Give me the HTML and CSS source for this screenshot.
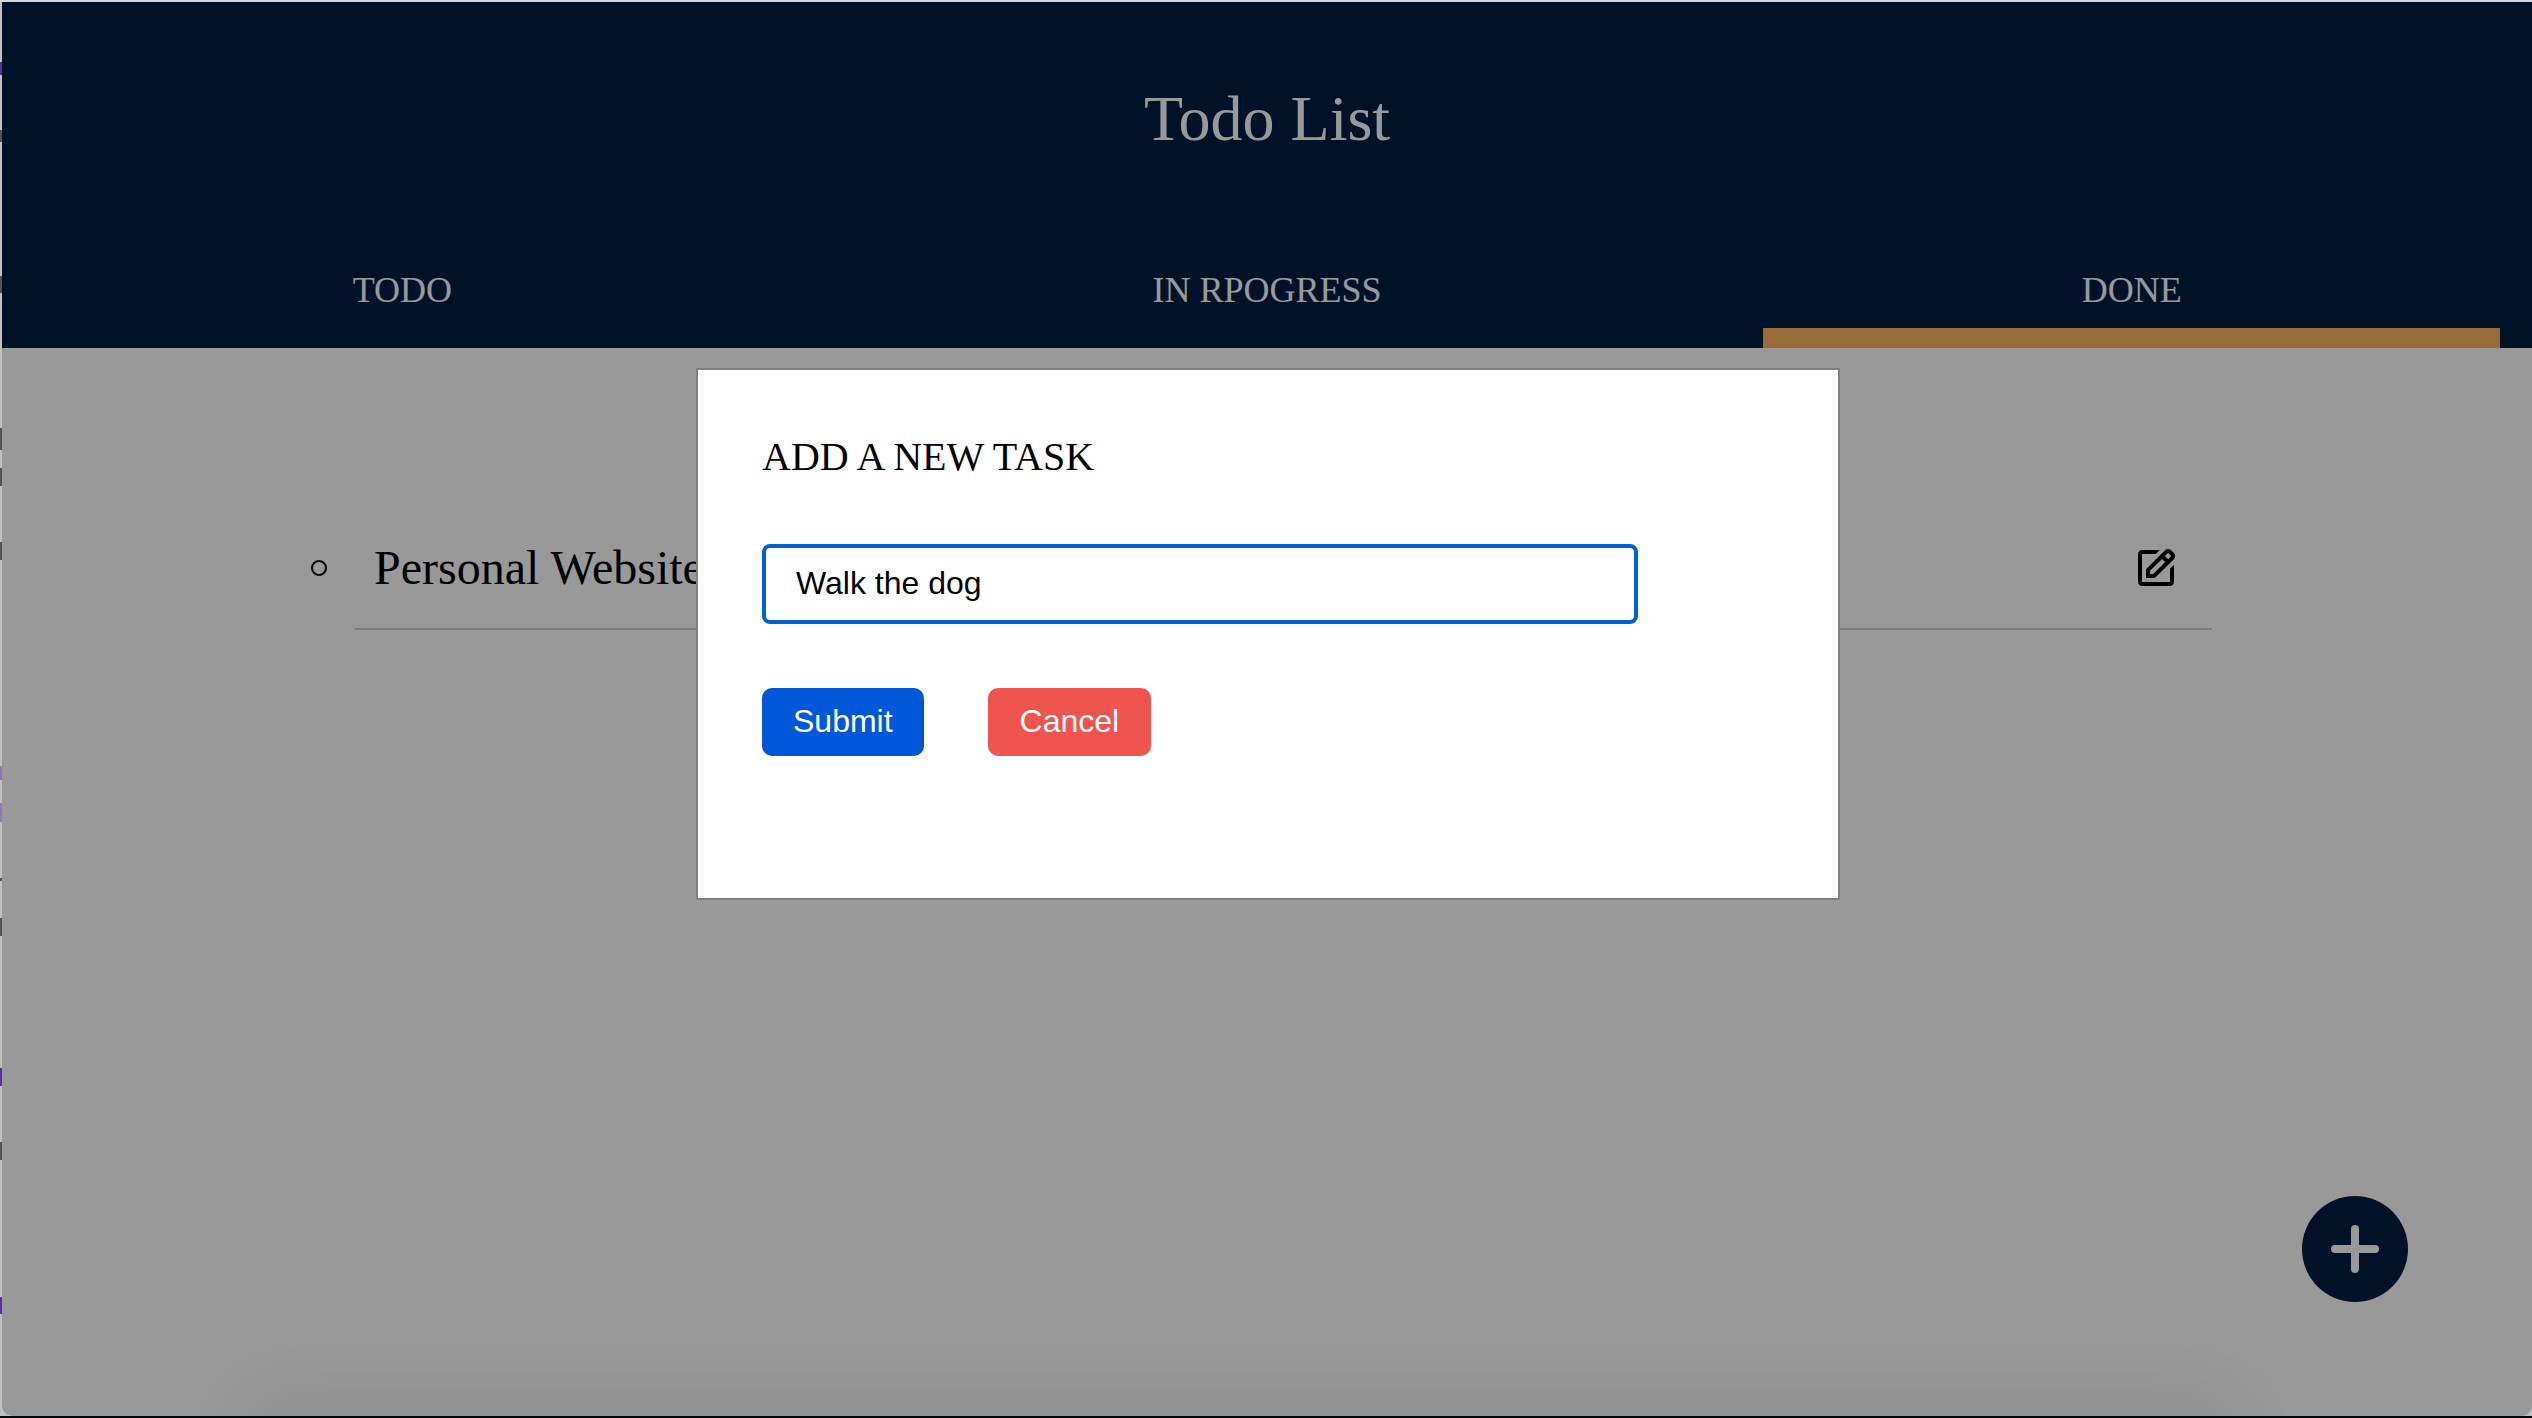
FILE: index.html
```html
<!DOCTYPE html>
<html lang="en">
<head>
  <meta charset="utf-8">
  <title>Todo List</title>
  <link rel="stylesheet" href="styles.css">
</head>
<body>
  <div class="window">
    <header class="header">
      <h1 class="title">Todo List</h1>
      <nav class="tabs">
        <a class="tab" href="#todo">TODO</a>
        <a class="tab" href="#progress">IN RPOGRESS</a>
        <a class="tab active" href="#done" aria-current="page">DONE</a>
      </nav>
    </header>
    <main class="content">
      <ul class="tasks">
        <li class="task">
          <span class="bullet"></span>
          <span class="task-name">Personal Website</span>
          <button class="edit" type="button" aria-label="Edit task">
            <svg viewBox="0 0 24 24" width="48" height="48" fill="currentColor" aria-hidden="true">
              <path d="m7 17.013 4.413-.015 9.632-9.54c.378-.378.586-.88.586-1.414s-.208-1.036-.586-1.414l-1.586-1.586c-.756-.756-2.075-.752-2.825-.003L7 12.583v4.43zM18.045 4.458l1.589 1.583-1.597 1.582-1.586-1.585 1.594-1.58zM9 13.417l6.03-5.973 1.586 1.586-6.029 5.971L9 15.006v-1.589z"/>
              <path d="M5 21h14c1.103 0 2-.897 2-2v-8.668l-2 2V19H5V5h6.847l2-2H5c-1.103 0-2 .897-2 2v14c0 1.103.897 2 2 2z"/>
            </svg>
          </button>
        </li>
      </ul>
    </main>
    <button class="add" type="button" aria-label="Add task">
      <svg viewBox="0 0 50 50" width="50" height="50" fill="none" stroke="currentColor" stroke-width="8" stroke-linecap="round" aria-hidden="true">
        <path d="M25 5v40M5 25h40"/>
      </svg>
    </button>
    <div class="scrim">
      <form class="modal" role="dialog" aria-labelledby="modal-title">
        <label class="modal-title" id="modal-title" for="task">ADD A NEW TASK</label>
        <input class="field" id="task" type="text" value="Walk the dog">
        <div class="actions">
          <button class="button submit" type="submit">Submit</button>
          <button class="button cancel" type="button">Cancel</button>
        </div>
      </form>
    </div>
  </div>
</body>
</html>
```
FILE: styles.css
```css
* { box-sizing: border-box; }

/* The page behind shows as a thin strip round the window, with slivers of its text at the left. */
body {
  margin: 0;
  height: 100vh;
  padding: 2px 0 2px 2px;
  background:
    linear-gradient(to top, #010a10 2px, transparent 2px),
    linear-gradient(to bottom, #d5d7de 2px, transparent 2px),
    linear-gradient(to bottom,
      transparent 62px, #5b2f9c 62px 75px,
      transparent 75px 130px, #50555a 130px 142px,
      transparent 142px 276px, #50555a 276px 293px,
      transparent 293px 428px, #50555a 428px 450px,
      transparent 450px 468px, #50555a 468px 486px,
      transparent 486px 542px, #50555a 542px 560px,
      transparent 560px 766px, #8f78b8 766px 780px,
      transparent 780px 803px, #8f78b8 803px 822px,
      transparent 822px 878px, #50555a 878px 881px,
      transparent 881px 918px, #50555a 918px 936px,
      transparent 936px 1068px, #5b2f9c 1068px 1086px,
      transparent 1086px 1142px, #50555a 1142px 1160px,
      transparent 1160px 1297px, #5b2f9c 1297px 1314px,
      transparent 1314px),
    #bfc0bf;
  font-family: "Liberation Serif", "Times New Roman", serif;
  color: #000;
}

button { border: 0; margin: 0; padding: 0; background: none; color: inherit; cursor: pointer; }
svg { display: block; }

.window {
  position: relative;
  height: 100%;
  overflow: hidden;
  background: #fff;
  border-bottom-left-radius: 10px;
  border-bottom-right-radius: 10px;
}

.header { background: #001e44; color: #fff; }

.title {
  margin: 0;
  padding: 79px 0 73px;
  font-size: 64px;
  line-height: 76px;
  font-weight: 400;
  text-align: center;
}

.tabs {
  display: grid;
  grid-template-columns: repeat(3, 1fr);
  gap: 128px;
  padding: 0 32px;
}

.tab {
  padding: 40px 0 18px;
  border-bottom: 20px solid transparent;
  font-size: 36px;
  line-height: 40px;
  text-align: center;
  color: inherit;
  text-decoration: none;
}

.tab.active { border-bottom-color: #fcb45a; }

.content { padding: 160px 320px 0 352px; }

.tasks { margin: 0; padding: 0; list-style: none; }

.task {
  display: flex;
  align-items: center;
  padding: 32px 32px 32px 0;
  border-bottom: 2px solid #d4d4d4;
  font-size: 48px;
  line-height: 56px;
}

.bullet {
  width: 16px;
  height: 16px;
  margin: 0 47px 0 -43px;
  border: 2px solid #000;
  border-radius: 50%;
}

.task-name { flex: 1; }

.add {
  position: absolute;
  right: 124px;
  bottom: 114px;
  display: grid;
  place-items: center;
  width: 106px;
  height: 106px;
  border-radius: 50%;
  background: #001e44;
  color: #fff;
}

.scrim {
  position: absolute;
  inset: 0;
  padding: 366px 0 0 2px;
  background: rgba(0, 0, 0, .4);
}

/* Soft shade rising from the bottom edge. */
.scrim::after {
  content: "";
  position: absolute;
  left: 10%;
  right: 12%;
  top: 100%;
  height: 40px;
  box-shadow: 0 0 80px rgba(0, 0, 0, .14);
}

.modal {
  width: 1144px;
  max-width: 100%;
  margin: 0 auto;
  padding: 63px 64px 142px;
  border: 2px solid #808080;
  background: #fff;
}

.modal-title { display: block; font-size: 40px; line-height: 48px; }

.field {
  display: block;
  width: 876px;
  max-width: 100%;
  height: 80px;
  margin: 63px 0 64px;
  padding: 0 30px 2px;
  border: 4px solid #0061d2;
  border-radius: 8px;
  outline: 0;
  background: #fff;
  font: 32px "Liberation Sans", Arial, sans-serif;
  color: #000;
}

.actions { display: flex; gap: 64px; }

.button {
  padding: 15px 32px 17px;
  border-radius: 10px;
  font: 32px/36px "Liberation Sans", Arial, sans-serif;
  color: #fff;
}

.submit { padding-inline: 31px; background: #0057d8; }
.cancel { background: #f0544f; }
```
